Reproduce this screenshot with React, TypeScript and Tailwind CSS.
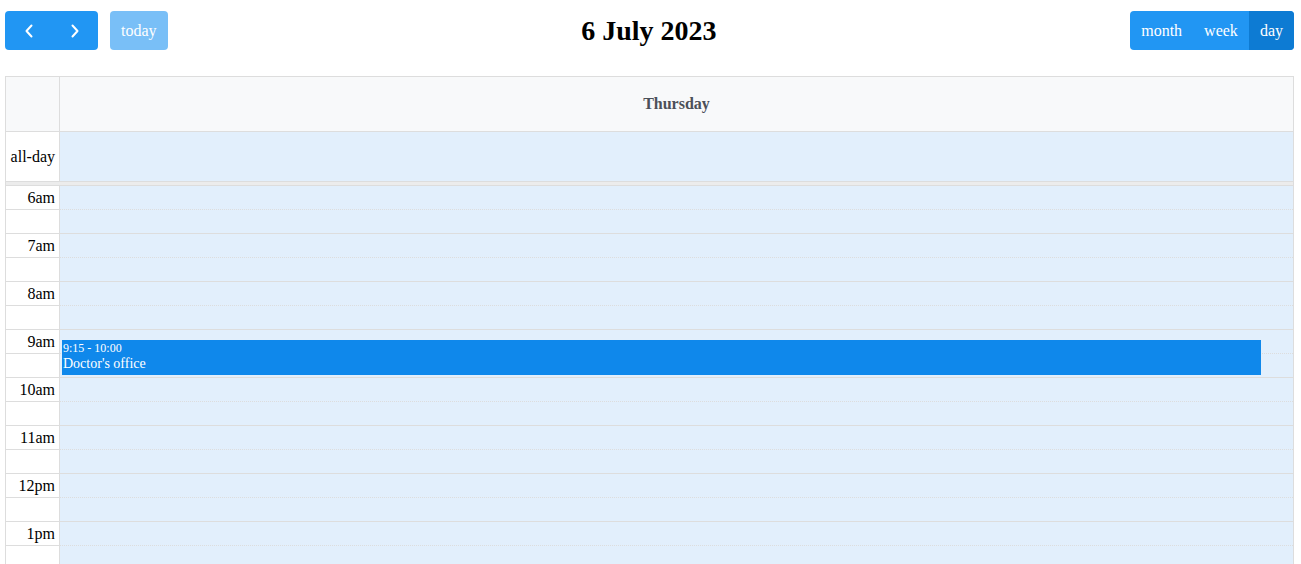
import React from 'react';

const hours = ['6am', '7am', '8am', '9am', '10am', '11am', '12pm', '1pm'];

function Chevron({ dir }: { dir: 'left' | 'right' }) {
  return (
    <svg width="10" height="14" viewBox="0 0 10 14" fill="none">
      <path
        d={dir === 'left' ? 'M7.5 1.5 L2.5 7 L7.5 12.5' : 'M2.5 1.5 L7.5 7 L2.5 12.5'}
        stroke="white"
        strokeWidth="2"
        strokeLinecap="round"
        strokeLinejoin="round"
      />
    </svg>
  );
}

export default function App() {
  return (
    <div className="h-screen overflow-hidden bg-white pl-[5px] pr-[7px] font-['Liberation_Serif',serif] text-black">
      <div className="flex items-center justify-between pt-[11px]">
        <div className="flex items-center">
          <div className="flex h-[39px] overflow-hidden rounded-[4px] bg-[#2196f3]">
            <button className="flex w-[47px] items-center justify-center">
              <Chevron dir="left" />
            </button>
            <button className="flex w-[46px] items-center justify-center">
              <Chevron dir="right" />
            </button>
          </div>
          <button className="ml-[12px] h-[39px] rounded-[4px] bg-[#2196f3] px-[11px] text-[16px] text-white opacity-60">
            today
          </button>
        </div>
        <h2 className="text-[28px] font-bold leading-[39px]">6 July 2023</h2>
        <div className="flex h-[39px] overflow-hidden rounded-[4px] bg-[#2196f3] text-[16px] text-white">
          <button className="px-[11px]">month</button>
          <button className="px-[11px]">week</button>
          <button className="bg-[#0d7bd3] px-[11px]">day</button>
        </div>
      </div>

      <div className="mt-[26px] border border-[#ddd]">
        <div className="flex h-[55px] border-b border-[#ddd] bg-[#f8f9fa]">
          <div className="w-[54px] border-r border-[#ddd]" />
          <div className="flex flex-1 items-center justify-center text-[16px] font-bold text-[#4b5058]">
            Thursday
          </div>
        </div>
        <div className="flex h-[50px] border-b border-[#ddd]">
          <div className="flex w-[54px] items-center justify-end border-r border-[#ddd] pr-[4px] text-[16px]">
            all-day
          </div>
          <div className="flex-1 bg-[#e2effc]" />
        </div>
        <div className="h-[3px] bg-[#ececec]" />
        <div className="flex">
          <div className="w-[54px] border-r border-[#ddd]">
            {hours.map((h) => (
              <div key={h}>
                <div className="flex h-[24px] items-center justify-end border-t border-[#ddd] pr-[4px] text-[16px] leading-[24px]">
                  {h}
                </div>
                <div className="h-[24px] border-t border-[#ddd]" />
              </div>
            ))}
          </div>
          <div className="relative flex-1 bg-[#e2effc]">
            {hours.map((h) => (
              <div key={h}>
                <div className="h-[24px] border-t border-[#ddd]" />
                <div className="h-[24px] border-t border-dotted border-[#ddd]" />
              </div>
            ))}
            <div className="absolute left-[2px] right-[32px] top-[155px] h-[35px] bg-[#0f88eb] px-[1px] pt-[1px] text-white">
              <div className="text-[12px] leading-[14px]">9:15 - 10:00</div>
              <div className="text-[14px] leading-[17px]">Doctor's office</div>
            </div>
          </div>
        </div>
      </div>
    </div>
  );
}
